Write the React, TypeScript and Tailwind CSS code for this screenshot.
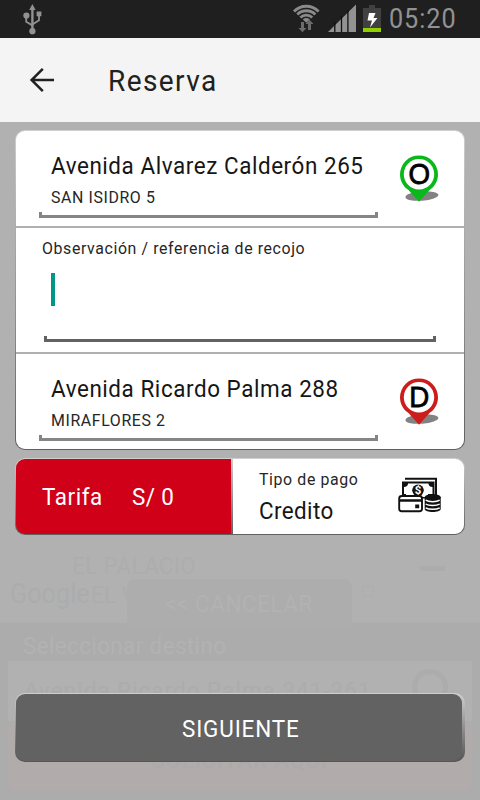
import React from "react";

/* Slightly condensed, widely tracked lettering used across the app. */
function Label({ className = "", children }: { className?: string; children: React.ReactNode }) {
  return <span className={"inline-block origin-left scale-x-[0.935] " + className}>{children}</span>;
}

function UsbIcon() {
  return (
    <svg width="20" height="32" viewBox="0 0 20 32" className="mt-[3px] shrink-0" fill="none" stroke="#929292">
      <path d="M9.4 27V5" strokeWidth="2.4" />
      <path d="M9.4 1l3.2 6h-6.4z" fill="#929292" stroke="none" />
      <path d="M3.2 12v6.800l6.200 3.600M16 11v6.200l-6.600 4.200" strokeWidth="1.8" />
      <circle cx="3.4" cy="12.6" r="3.100" fill="#929292" stroke="none" />
      <path d="M13.6 8.4h4.8v4.8h-4.800z" fill="#929292" stroke="none" />
      <circle cx="9.4" cy="28.200" r="3.100" fill="#929292" stroke="none" />
    </svg>
  );
}

function StatusIcons() {
  return (
    <svg width="90" height="38" viewBox="292 0 90 38" className="ml-auto shrink-0">
      <g fill="none" stroke="#8a8a8a" strokeWidth="2.800">
        <path d="M294 11.500A17 17 0 0 1 318.600 11.500" />
        <path d="M297.300 14.500A12.700 12.700 0 0 1 315.300 14.500" />
        <path d="M300.400 17.500A8.400 8.400 0 0 1 312.200 17.500" />
      </g>
      <path d="M302.800 19.400A5 5 0 0 1 309.800 19.400L306.300 22.800z" fill="#8a8a8a" />
      <path d="M301 22h3v6h2.500l-4 4.300-4-4.300h2.500zM308 30v-6h-2.500l4-4.200 4 4.200H311v6z" fill="#6c6c6c" />
      <path d="M328 32L356 4.500V32z" fill="#929292" />
      <path d="M334.800 22v10M341.500 16v16M347.900 10v22" stroke="#111" strokeWidth="1.300" />
      <path d="M369 5h6v3h6v24h-18V8h6z" fill="#414141" />
      <path d="M363 28h18v4h-18z" fill="#92cf00" />
      <path d="M369 13h6.500l-2 5h4l-7.500 9.500 2-7h-4.500z" fill="#fff" />
    </svg>
  );
}

function Pin({ letter, color }: { letter: string; color: string }) {
  return (
    <svg width="44" height="52" viewBox="0 0 44 52" className="mt-[22px] shrink-0">
      <ellipse cx="23.900" cy="43" rx="16.500" ry="4.700" fill="#828282" transform="rotate(-4 24 43)" />
      <path d="M21 48.700L10.500 37C6 34 2 28.500 2 21.400a19 19 0 0 1 38 0C40 28.500 36 34 31.500 37z" fill={color} />
      <circle cx="21" cy="21.200" r="15.200" fill="#fff" />
      <text x="22.600" y="31" textAnchor="middle" fontSize="29.500" stroke="#000" strokeWidth="0.800" transform="scale(0.940 1)" className="font-['Liberation_Sans',sans-serif]">
        {letter}
      </text>
    </svg>
  );
}

function MoneyIcon() {
  return (
    <svg width="46" height="38" viewBox="0 0 46 38" className="mt-[17px] mr-[21px] ml-auto shrink-0">
      <path d="M8 2.800h31V21" fill="none" stroke="#111" strokeWidth="2" />
      <path d="M5 5.500h32.500v17H5z" fill="#111" />
      <path d="M11 7.500h20.500c0 2.300 1.500 3.500 4 3.500v7H31V21H9v-3H7v-7c2.500 0 4-1.200 4-3.500z" fill="#fff" />
      <circle cx="21" cy="14.300" r="5.800" fill="#111" />
      <text x="21" y="18.300" textAnchor="middle" fontSize="11.500" fontWeight="700" fill="#fff" className="font-['Roboto',sans-serif]">$</text>
      <rect x="2.200" y="20" width="22.800" height="15.200" rx="2.500" fill="#fff" stroke="#111" strokeWidth="1.900" />
      <path d="M2.200 23.200H25V25.800H2.200z" fill="#111" />
      <path d="M18.200 28.500h4v3.800h-4z" fill="#111" />
      <path d="M27.700 21h16v12c0 4-16 4-16 0z" fill="#111" />
      <ellipse cx="35.700" cy="21.200" rx="8" ry="3.200" fill="#111" />
      <path d="M28.700 24.200c3 2 11 2 14 0M28.700 28c3 2 11 2 14 0M28.700 31.800c3 2 11 2 14 0" fill="none" stroke="#fff" strokeWidth="1.400" />
    </svg>
  );
}

function Underline({ className }: { className: string }) {
  return <div className={"h-[6px] border-x-[3px] border-current bg-[linear-gradient(to_top,currentColor_3px,transparent_3px)] " + className} />;
}

function Address({ title, district, letter, color }: { title: string; district: string; letter: string; color: string }) {
  return (
    <section className="flex h-[95px] justify-between pr-[22px] pl-[23px]">
      <div className="w-[339px] pt-[19px]">
        <div className="h-8 pl-3 text-[24px] leading-8">
          <Label className="tracking-[0.6px]">{title}</Label>
        </div>
        <div className="mt-1 h-[22px] pl-3 text-[17px] leading-[22px] text-[#262626]">
          <Label className="tracking-[0.65px]">{district}</Label>
        </div>
        <Underline className="mt-1 text-[#858585]" />
      </div>
      <Pin letter={letter} color={color} />
    </section>
  );
}

/* Map screen that stays faintly visible under the dimmed overlay. */
function DimmedMap() {
  return (
    <div className="absolute inset-0 flex flex-col overflow-hidden bg-[#b1b1b1] text-[24px] leading-8">
      <div className="relative h-[623px] shrink-0">
        <Label className="absolute top-[550px] left-[72px] tracking-[0.4px] text-[#adadad]">EL PALACIO</Label>
        <Label className="absolute top-[578px] left-[10px] text-[27px] text-[#abacae]">Google</Label>
        <Label className="absolute top-[579px] left-[91px] text-[#adadad]">EL V</Label>
        <div className="absolute top-[566px] left-[420px] h-[5px] w-[25px] bg-[#acacac]" />
        <div className="absolute top-[585px] left-[362px] h-[12px] w-[12px] border-2 border-[#acb0b0]" />
        <div className="absolute top-[579px] left-[127px] z-10 h-[49px] w-[225px] rounded-lg bg-[#adadad] pt-[9px] pl-[38px] text-[#b2b2b2]">
          <Label className="tracking-[0.6px]">&lt;&lt; CANCELAR</Label>
        </div>
      </div>
      <div className="flex flex-1 flex-col bg-[#acacac] px-2 pt-[7px]">
        <div className="h-[31px] pl-[15px] text-[#b2b2b2]">
          <Label className="tracking-[0.4px]">Seleccionar destino</Label>
        </div>
        <div className="flex h-[60px] justify-between bg-[#b1b1b1] pr-6 pl-[16px] text-[#acacac]">
          <Label className="pt-[14px] tracking-[1.1px]">Avenida Ricardo Palma 341-361</Label>
          <div className="-ml-10 mt-2 h-9 w-9 shrink-0 rounded-full border-[5px] border-[#acacac]" />
        </div>
        <div className="mt-px h-[68px] rounded-lg bg-[#b1acab] pt-[22px] pl-[143px] font-medium text-[#aaaaaa]">
          <Label className="tracking-[0.8px]">SOLICITAR AQUÍ</Label>
        </div>
      </div>
    </div>
  );
}

export default function App() {
  return (
    <div className="relative flex h-[800px] w-[480px] flex-col overflow-hidden font-['Roboto',sans-serif] whitespace-nowrap text-[#161616]">
      <DimmedMap />
      <div className="relative flex h-[38px] shrink-0 bg-[#1f1f1f] pl-[23px]">
        <UsbIcon />
        <StatusIcons />
        <div className="w-[98px] pt-[3px] pl-[7px] text-[27px] leading-8 text-[#929292]">
          <Label className="tracking-[1px]">05:20</Label>
        </div>
      </div>
      <header className="relative flex h-[84px] shrink-0 items-center bg-[#f4f4f4]">
        <svg width="26" height="26" viewBox="0 0 26 26" className="ml-[29px]" fill="none" stroke="#212121" strokeWidth="2.500">
          <path d="M25 13H3M13.800 1.800L2.600 13l11.200 11.200" />
        </svg>
        <h1 className="ml-[53px] pt-[2px] text-[30px] leading-9 text-[#212121]">
          <Label className="tracking-[1.5px]">Reserva</Label>
        </h1>
      </header>
      <main className="relative flex flex-1 flex-col px-[15px] pt-2">
        <div className="rounded-[10px] bg-linear-to-b from-[#d0d0d0] to-[#606060] p-px">
          <div className="h-[318px] overflow-hidden rounded-[9px] bg-white">
            <Address title="Avenida Alvarez Calderón 265" district="SAN ISIDRO 5" letter="O" color="#0ab81c" />
            <section className="h-[128px] border-y-2 border-[#b0b0b0] pt-[9px] pl-[26px]">
              <div className="h-[22px] text-[17px] leading-[22px] text-[#262626]">
                <Label className="tracking-[0.65px]">Observación / referencia de recojo</Label>
              </div>
              <div className="mt-[14px] ml-[9px] h-[33px] w-1 bg-[#009688]" />
              <Underline className="mt-[30px] ml-[2px] w-[392px] text-[#626262]" />
            </section>
            <Address title="Avenida Ricardo Palma 288" district="MIRAFLORES 2" letter="D" color="#cc1c1c" />
          </div>
        </div>
        <div className="mt-2 rounded-[10px] bg-linear-to-b from-[#d0d0d0] to-[#606060] p-px">
          <div className="flex h-[75px] overflow-hidden rounded-[9px]">
            <div className="flex w-[215px] items-center bg-[#d10019] pl-[26px] text-[24px] text-white">
              <div className="w-[90px]">
                <Label className="tracking-[0.6px]">Tarifa</Label>
              </div>
              <Label className="tracking-[0.4px]">S/ 0</Label>
            </div>
            <div className="ml-[2px] flex flex-1 bg-white pl-[26px]">
              <div className="pt-[9px]">
                <div className="text-[17px] leading-[22px] text-[#262626]">
                  <Label className="tracking-[0.65px]">Tipo de pago</Label>
                </div>
                <div className="mt-[5px] text-[24px] leading-8">
                  <Label className="tracking-[0.4px]">Credito</Label>
                </div>
              </div>
              <MoneyIcon />
            </div>
          </div>
        </div>
        <div className="mt-[158px] rounded-[10px] bg-linear-to-b from-[#d0d0d0] to-[#555] pt-px pr-[3px] pb-px pl-px">
          <button className="block h-[67px] w-full rounded-[9px] bg-[#626262] pt-[2px] pl-[11px] text-[24px] text-white">
            <Label className="tracking-[0.9px]">SIGUIENTE</Label>
          </button>
        </div>
      </main>
    </div>
  );
}
